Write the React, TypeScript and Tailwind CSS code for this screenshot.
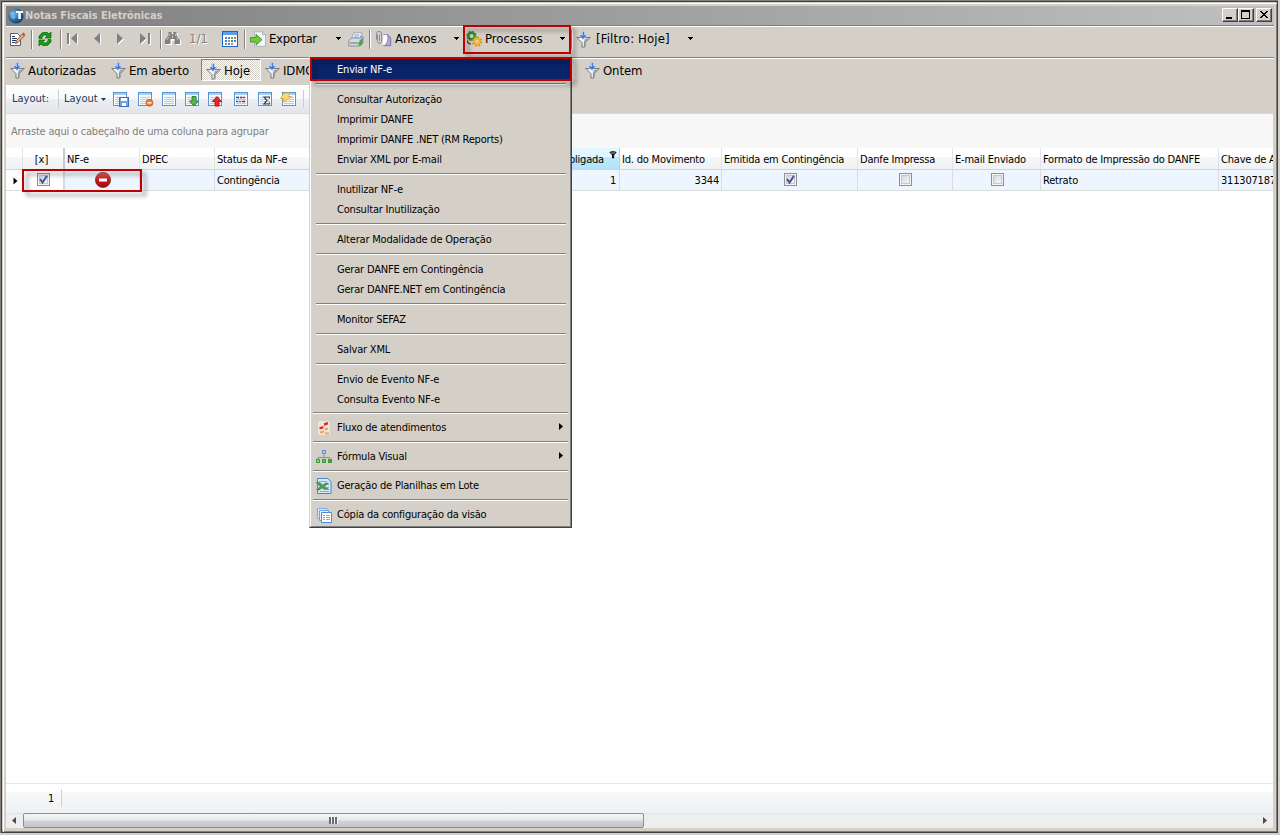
import type { ReactNode } from "react";

interface MenuEntry {
  label: string;
  icon?: ReactNode;
  submenu?: boolean;
}

/* ---------- icons ---------- */

const AppIcon = () => (
  <svg width="16" height="16" viewBox="0 0 16 16">
    <defs>
      <radialGradient id="globe" cx="0.35" cy="0.35" r="0.7">
        <stop offset="0" stopColor="#7db4dc" />
        <stop offset="0.6" stopColor="#2667a5" />
        <stop offset="1" stopColor="#123f78" />
      </radialGradient>
    </defs>
    <circle cx="8" cy="8" r="7.6" fill="url(#globe)" />
    <path d="M2 5c2-3 4-1 4 1s2 2 1 4-3 1-4 0" fill="#8ec6ea" opacity="0.6" />
    <path d="M8 3h7v2h-2.200V11H10.300V5H8z" fill="#fff" />
  </svg>
);

const EditIcon = () => (
  <svg width="17" height="16" viewBox="0 0 17 16">
    <path d="M1.500 2.500h7l3 3v9h-10z" fill="#fff" stroke="#5a5f6e" />
    <path d="M3 5.500h3M3 7.500h5M3 9.500h4M3 11.500h3" stroke="#2d3560" />
    <path d="M6.500 12.500l1-3 6-6.500 2 1.800-6.500 6.700z" fill="#f2b27c" stroke="#6b4030" strokeWidth="0.800" />
    <path d="M13 3l1.300-1.500 2 1.800-1.300 1.700z" fill="#c8483c" />
  </svg>
);

const RefreshIcon = () => (
  <svg width="16" height="16" viewBox="0 0 16 16" fill="#12a012" stroke="#0a6410" strokeWidth="0.7">
    <path d="M2 7.500V5l3.500-3.500h5L12 3l2-2v6H8l2-2-1-1H7L5 6v1.500z" />
    <path d="M14 8.500V11l-3.500 3.500h-5L4 13l-2 2V9h6l-2 2 1 1h2l2-2V8.500z" />
  </svg>
);

const NavIcon = ({ d, w }: { d: string; w: number }) => (
  <svg width={w} height="14" viewBox={`0 0 ${w} 14`}>
    <path d={d} transform="translate(1 1)" fill="#fff" />
    <path d={d} fill="#808080" />
  </svg>
);

const BinocularsIcon = () => (
  <svg width="17" height="14" viewBox="0 0 17 14">
    <g transform="translate(1 1)" fill="#fff">
      <path d="M4 0h3v2h2V0h3v3l3 5v4h-5V8H6v4H0V8l3-5z" />
    </g>
    <path d="M3.500 0h3v2h2V0h3v3l3.500 5v4h-5.500V7h-4v5H0V8l3.500-5z" fill="#808080" />
    <path d="M3.500 5l-1.500 3M11.500 5l1.500 3M7.500 3v3M4.500 2v2M10.500 2v2" stroke="#d4d0c8" strokeWidth="0.800" />
  </svg>
);

const CalendarIcon = () => (
  <svg width="16" height="16" viewBox="0 0 16 16" shapeRendering="crispEdges">
    <rect x="0.500" y="0.500" width="15" height="15" fill="#fff" stroke="#1c62c4" />
    <rect x="1" y="1" width="14" height="3" fill="#5f9cea" />
    <path d="M3 6h2v2H3zM6 6h2v2H6zM3 9h2v2H3zM6 12h2v2H6zM9 9h2v2H9zM12 9h2v2h-2z" fill="#3c86dc" />
    <path d="M9 6h2v2H9zM3 12h2v2H3z" fill="#49a94d" />
    <path d="M12 6h2v2h-2zM6 9h2v2H6zM9 12h2v2H9z" fill="#e07b42" />
  </svg>
);

const ExportIcon = () => (
  <svg width="17" height="16" viewBox="0 0 17 16">
    <path d="M4.500 0.800h8l3 3v11.500h-11z" fill="#f6f8fc" stroke="#a3a9b8" strokeWidth="0.800" />
    <path d="M12.500 0.800v3h3" fill="#cfd6e4" stroke="#a3a9b8" strokeWidth="0.800" />
    <path d="M0.500 6.500h5.500V3.300L12 8.700l-6 5.500v-3.200H0.500z" fill="#72cb3c" stroke="#378a1c" strokeWidth="0.800" />
  </svg>
);

const PrinterIcon = () => (
  <svg width="16" height="15" viewBox="0 0 16 15">
    <path d="M6 0.800h8l-2.500 6H3.500z" fill="#fff" stroke="#8b93a5" strokeWidth="0.800" />
    <path d="M6.500 3h5M5.800 5h5" stroke="#6c9bd4" />
    <path d="M0.800 8.500l3-2.500h8l3.200-1.500v6l-3 3.500H0.800z" fill="#d5dade" stroke="#7a828c" strokeWidth="0.800" />
    <path d="M11.500 8.500l3.300-3V10.500l-3.300 3.300z" fill="#76828e" />
    <path d="M2 11h8" stroke="#68717e" />
    <path d="M10.500 10h4v2l-1.500 1.500h-2.500z" fill="#2fb52f" />
  </svg>
);

const AttachIcon = () => (
  <svg width="17" height="16" viewBox="0 0 17 16">
    <path d="M8.500 3.500h4l3 3v8h-8" fill="#fff" stroke="#8d82b5" strokeWidth="0.800" />
    <path d="M12.500 3.500c1 4 .5 8-3 11.200h6.200V7z" fill="#b3a8d8" stroke="#6d5da5" strokeWidth="0.700" />
    <path d="M2.500 3.500v7a2 2 0 004 0V3a2.200 2.200 0 00-5-.5v6M4.500 3.500v6.500" fill="none" stroke="#6f8dac" strokeWidth="0.900" />
  </svg>
);

const GearsIcon = () => (
  <svg width="17" height="16" viewBox="0 0 17 16">
    <circle cx="5.500" cy="5" r="3.300" fill="none" stroke="#2f8f33" strokeWidth="2.600" />
    <circle cx="5.500" cy="5" r="4.600" fill="none" stroke="#3da63c" strokeWidth="1.400" strokeDasharray="1.800 1.800" />
    <circle cx="11" cy="10.500" r="3" fill="none" stroke="#f5b027" strokeWidth="2.600" />
    <circle cx="11" cy="10.500" r="4.500" fill="none" stroke="#d98f14" strokeWidth="1.500" strokeDasharray="1.800 1.700" />
    <path d="M1.500 9.500c0 2 1.500 3.500 3.500 3.500" fill="none" stroke="#333" strokeWidth="1.200" />
  </svg>
);

const FilterIcon = () => (
  <svg width="15" height="17" viewBox="0 0 15 17">
    <path d="M1 6.500h13L9 11.500v4l-3 1v-5z" fill="#f4f4f4" />
    <path d="M9 7.500L7.800 11v4.500l1.200-.5v-3.500L13 7.500z" fill="#a3a6ab" />
    <path d="M0.500 6.500h14M1 6.700l5 5v4.500M14 6.700l-5 5v4M6 16h3" fill="none" stroke="#6b6e73" strokeWidth="0.900" />
    <path d="M5.500 0.500h3V4H11L7 8.500 3 4h2.500z" fill="#3f78da" stroke="#dbe6f8" strokeWidth="0.500" />
    <path d="M6 1h1v4H6z" fill="#9dc0f5" />
  </svg>
);

const DropArrow = () => (
  <svg width="7" height="4" viewBox="0 0 7 4" shapeRendering="crispEdges" className="shrink-0">
    <path d="M1 0h5v1H1zM2 1h3v1H2zM3 2h1v1H3z" fill="#000" />
  </svg>
);

const GridBase = ({ children, x = 1 }: { children?: ReactNode; x?: number }) => (
  <svg width="16" height="16" viewBox="0 0 16 16">
    <g transform={`translate(${x} 1)`}>
      <rect x="0.500" y="0.500" width="13" height="13" fill="#fff" stroke="#5b94d2" />
      <rect x="1" y="1" width="12" height="2" fill="#a9cdf2" />
      <path d="M2 5.500h10M2 7.500h10M2 9.500h10M2 11.500h10" stroke="#a9c9dc" strokeWidth="0.900" />
      <path d="M4.500 4v9M7.500 4v9M10.500 4v9" stroke="#c9dcec" strokeWidth="0.800" />
    </g>
    {children}
  </svg>
);

const SaveGridIcon = () => (
  <GridBase x={0}>
    <rect x="6.500" y="6.500" width="9" height="9" fill="#6fa4e4" stroke="#3a70ba" />
    <path d="M8 7h6v3H8zM9 12h4v3H9z" fill="#fff" />
  </GridBase>
);
const RemoveGridIcon = () => (
  <GridBase x={0}>
    <circle cx="11.500" cy="11.800" r="3.500" fill="#ec7a35" stroke="#c05a1c" strokeWidth="0.700" />
    <path d="M9.500 11.800h4" stroke="#fff" strokeWidth="1.400" />
  </GridBase>
);
const DownGridIcon = () => (
  <GridBase>
    <path d="M8 5.500h4V10h2.500L10 15 5.500 10H8z" fill="#58b548" stroke="#2a7a20" strokeWidth="0.900" />
  </GridBase>
);
const UpGridIcon = () => (
  <GridBase>
    <path d="M8 15h4v-4.500h2.500L10 5.500l-4.500 5H8z" fill="#e8262b" stroke="#a30f14" strokeWidth="0.900" />
  </GridBase>
);
const BandGridIcon = () => (
  <GridBase>
    <path d="M3 6.500h3M7 6.500h2M3 10.500h2M9 10.500h3" stroke="#2b4c7d" strokeWidth="1.500" />
    <path d="M9.500 6.500H12M6 10.500h2" stroke="#d3322e" strokeWidth="1.500" />
  </GridBase>
);
const SumGridIcon = () => (
  <GridBase>
    <path d="M12.500 7.500V6H7l3 3.500L7 13h5.500v-1.500" fill="none" stroke="#3a404c" strokeWidth="1.200" />
  </GridBase>
);
const FlashGridIcon = () => (
  <GridBase x={2}>
    <path d="M4 2h6.500L8 5.500h3.500L2 12.500l2.500-5H0.500z" fill="#ffd868" stroke="#dba53a" strokeWidth="0.800" />
  </GridBase>
);

const FlowIcon = () => (
  <svg width="16" height="16" viewBox="0 0 16 16">
    <rect x="2" y="1" width="12" height="14" fill="#eee4da" />
    <path d="M8 3l4-1v2.500L8 6zM3.500 7l4-1v2.500l-4 1z" fill="#d6342c" />
    <path d="M8.500 8.500l3.500-1v2l-3 1zM4 11.500l4-1v2l-3.500 1zM9 12.500h4v1.800H9z" fill="#eea04a" />
  </svg>
);
const TreeIcon = () => (
  <svg width="16" height="16" viewBox="0 0 16 16">
    <path d="M8 5v3M2 10V8.500h12V10" fill="none" stroke="#8d9096" />
    <rect x="6.500" y="1.500" width="3" height="3" fill="#a6cbf3" stroke="#5c94d8" />
    <g fill="#8ed87b" stroke="#3c9c42">
      <rect x="0.500" y="10.500" width="3" height="3" />
      <rect x="6.500" y="10.500" width="3" height="3" fill="#5fbf58" />
      <rect x="12.500" y="10.500" width="3" height="3" fill="#3da344" />
    </g>
  </svg>
);
const SheetIcon = () => (
  <svg width="16" height="16" viewBox="0 0 16 16">
    <path d="M1.500 0.500h10l3.500 3v12H1.500z" fill="#d5e7fb" stroke="#4787cd" />
    <path d="M3 3.500h8M8 6.500h5M10 9.500h3M4 13.500h9" stroke="#7eb0e4" />
    <path d="M0 4.500h4l2.500 2.500 3-2h3L8.500 8.500l4.500 3H8.500L6 10l-2.500 2H0.500L4 8.500z" fill="#4a9c50" stroke="#2a7436" strokeWidth="0.400" />
  </svg>
);
const CopyIcon = () => (
  <svg width="16" height="16" viewBox="0 0 16 16">
    <path d="M1.500 1.500h9v10h-9z" fill="#dcebfb" stroke="#79ace2" />
    <path d="M3.500 3.500h9v10h-9z" fill="#e6f1fc" stroke="#6aa1de" />
    <path d="M5.500 5.500h10v10h-10z" fill="#fff" stroke="#4e8dd4" />
    <path d="M7 8.500h2M7 10.500h2M7 12.500h2" stroke="#6fbf4c" />
    <path d="M10 8.500h4M10 10.500h4M10 12.500h4" stroke="#7eaee2" />
  </svg>
);

const StopIcon = () => (
  <svg width="16" height="16" viewBox="0 0 16 16">
    <defs>
      <linearGradient id="stop" x1="0" y1="0" x2="0" y2="1">
        <stop offset="0" stopColor="#e8685c" />
        <stop offset="0.500" stopColor="#c8171a" />
        <stop offset="1" stopColor="#9c0c10" />
      </linearGradient>
    </defs>
    <circle cx="8" cy="8" r="7.600" fill="url(#stop)" stroke="#8e1d1c" strokeWidth="0.700" />
    <rect x="4" y="6.500" width="8" height="3" fill="#fff" />
  </svg>
);

/* ---------- small parts ---------- */

const Sep = ({ className = "" }: { className?: string }) => (
  <div className={`h-[19px] w-[2px] shrink-0 border-l border-[#808080] bg-white ${className}`} />
);

const Slot = ({ className = "", children }: { className?: string; children: ReactNode }) => (
  <div className={`flex shrink-0 items-center whitespace-nowrap ${className}`}>{children}</div>
);

const CheckBox = ({ checked = false }: { checked?: boolean }) => (
  <span className="flex size-[13px] items-center justify-center border border-[#8e8f8f] bg-[#f4f4f4] p-px">
    <span className="flex size-[9px] items-center justify-center border border-[#c3c7ce] bg-gradient-to-br from-[#d3d6db] to-[#f8f8f8]">
      {checked && (
        <svg width="9" height="9" viewBox="0 0 9 9" className="shrink-0">
          <path d="M1 4l2.500 3.500L8 0.800" fill="none" stroke="#3c539c" strokeWidth="2" />
        </svg>
      )}
    </span>
  </span>
);

const WinButton = ({ d, className = "" }: { d: string; className?: string }) => (
  <button
    className={`flex h-[14px] w-4 items-center justify-center border border-t-white border-r-[#404040] border-b-[#404040] border-l-white bg-[#d4d0c8] shadow-[inset_-1px_-1px_0_#808080] ${className}`}
  >
    <svg width="14" height="12" viewBox="0 0 14 12" shapeRendering="crispEdges" className="shrink-0">
      <path d={d} fill="#000" />
    </svg>
  </button>
);

const columns = [
  { title: "NF-e", cell: <StopIcon />, center: true },
  { title: "DPEC", cell: "" },
  { title: "Status da NF-e", cell: "Contingência" },
  { title: "Cód. Coligada", cell: "1", right: true, filtered: true },
  { title: "Id. do Movimento", cell: "3344", right: true },
  { title: "Emitida em Contingência", cell: <CheckBox checked />, center: true },
  { title: "Danfe Impressa", cell: <CheckBox />, center: true },
  { title: "E-mail Enviado", cell: <CheckBox />, center: true },
  { title: "Formato de Impressão do DANFE", cell: "Retrato" },
  { title: "Chave de A", cell: "311307187" },
];

const gridCols =
  "grid shrink-0 grid-cols-[17px_42px_75px_75px_306px_99px_102px_136px_95px_88px_178px_60px]";

const menuGroups: string[][] = [
  ["Enviar NF-e"],
  ["Consultar Autorização", "Imprimir DANFE", "Imprimir DANFE .NET (RM Reports)", "Enviar XML por E-mail"],
  ["Inutilizar NF-e", "Consultar Inutilização"],
  ["Alterar Modalidade de Operação"],
  ["Gerar DANFE em Contingência", "Gerar DANFE.NET em Contingência"],
  ["Monitor SEFAZ"],
  ["Salvar XML"],
  ["Envio de Evento NF-e", "Consulta Evento NF-e"],
];

const menuExtras: MenuEntry[] = [
  { label: "Fluxo de atendimentos", icon: <FlowIcon />, submenu: true },
  { label: "Fórmula Visual", icon: <TreeIcon />, submenu: true },
  { label: "Geração de Planilhas em Lote", icon: <SheetIcon /> },
  { label: "Cópia da configuração da visão", icon: <CopyIcon /> },
];

/* ---------- sections ---------- */

const TitleBar = () => (
  <div className="flex h-[19px] shrink-0 items-center bg-gradient-to-r from-[#808080] to-[#c0c0c0] pl-[2px]">
    <AppIcon />
    <span className="ml-px pt-px text-[11px] font-bold tracking-[-0.08px] text-[#d4d0c8]">
      Notas Fiscais Eletrônicas
    </span>
    <div className="ml-auto flex pr-[2px] pb-px">
      <WinButton d="M3 8h6v2H3z" />
      <WinButton d="M2 1h9v9H2zM3 3v6h7V3z" />
      <WinButton className="ml-[2px]" d="M3 2h2v1h1v1h2V3h1V2h2v1h-1v1H9v1H8v1h1v1h1v1h1v1H9V8H8V7H6v1H5v1H3V8h1V7h1V6h1V5H5V4H4V3H3z" />
    </div>
  </div>
);

const ToolBar = () => (
  <div className="flex h-[32px] shrink-0 border-t border-b border-t-white border-b-[#808080] text-[13px]">
    <div className="flex h-[24px] items-center">
      <Slot className="ml-[3px] w-[22px]"><EditIcon /></Slot>
      <Sep />
      <Slot className="ml-[4px] w-[23px]"><RefreshIcon /></Slot>
      <Sep />
      <Slot className="ml-[5px] w-[26px]"><NavIcon w={13} d="M0 1h2v11H0zM10 1v11L4 6.500z" /></Slot>
      <Slot className="w-[24px]"><NavIcon w={9} d="M7 1v11L1 6.500z" /></Slot>
      <Slot className="w-[23px]"><NavIcon w={9} d="M0 1v11l6-5.500z" /></Slot>
      <Slot className="w-[21px]"><NavIcon w={14} d="M0 1v11l6-5.500zM8 1h2v11H8z" /></Slot>
      <Sep className="-ml-px" />
      <Slot className="ml-[3px] w-[24px]"><BinocularsIcon /></Slot>
      <Slot className="w-[33px] text-[#808080] [text-shadow:1px_1px_0_#fff]">1/1</Slot>
      <Slot className="w-[22px] pb-px"><CalendarIcon /></Slot>
      <Sep />
      <Slot className="ml-[4px] w-[19px]"><ExportIcon /></Slot>
      <Slot className="w-[66px] tracking-[-0.3px]">Exportar</Slot>
      <Slot className="w-[13px]"><DropArrow /></Slot>
      <Slot className="w-[21px]"><PrinterIcon /></Slot>
      <Sep />
      <Slot className="ml-[4px] w-[20px]"><AttachIcon /></Slot>
      <Slot className="w-[58px] tracking-[-0.1px]">Anexos</Slot>
      <Slot className="w-[13px]"><DropArrow /></Slot>
      <Slot className="w-[19px]"><GearsIcon /></Slot>
      <Slot className="w-[74px]">Processos</Slot>
      <Slot className="w-[12px]"><DropArrow /></Slot>
      <Sep />
      <Slot className="ml-[3px] w-[20px]"><FilterIcon /></Slot>
      <Slot className="w-[91px] tracking-[0.150px]">[Filtro: Hoje]</Slot>
      <Slot><DropArrow /></Slot>
    </div>
  </div>
);

const FilterBar = () => (
  <div className="flex h-[27px] shrink-0 items-start border-t border-white text-[13px] tracking-[-0.1px]">
    <Slot className="ml-[4px] h-[22px] w-[18px]"><FilterIcon /></Slot>
    <Slot className="h-[23px] w-[83px]">Autorizadas</Slot>
    <Slot className="h-[22px] w-[18px]"><FilterIcon /></Slot>
    <Slot className="h-[23px] w-[72px]">Em aberto</Slot>
    <Slot className="h-[22px] w-[60px] border border-t-[#808080] border-r-white border-b-white border-l-[#808080] bg-[#eae8e3] bg-[repeating-conic-gradient(#fff_0_25%,#d4d0c8_0_50%)] bg-size-[2px_2px] pt-[2px] pl-[4px]">
      <FilterIcon />
      <span className="ml-[3px]">Hoje</span>
    </Slot>
    <Slot className="ml-[4px] h-[22px] w-[18px]"><FilterIcon /></Slot>
    <Slot className="h-[23px] w-[302px]">IDMOV</Slot>
    <Slot className="h-[22px] w-[18px]"><FilterIcon /></Slot>
    <Slot className="h-[23px]">Ontem</Slot>
  </div>
);

const LayoutBar = () => (
  <div className="h-[28px] shrink-0 bg-[#d4d0c8]">
    <div className="flex h-[28px] w-[420px] items-center bg-[linear-gradient(#fff_0,#f7f8fa_50%,#eceef2_50%,#e3e5ea_100%)] text-[11px] text-[#1e395b]">
      <Slot className="ml-[6px] w-[46px] pt-px">Layout:</Slot>
      <div className="h-[18px] w-px bg-[#c9ccd2]" />
      <Slot className="ml-[5px] w-[37px] pt-px">Layout</Slot>
      <Slot className="w-[12px]">
        <svg width="5" height="3" viewBox="0 0 5 3"><path d="M0 0h5L2.500 3z" fill="#1e395b" /></svg>
      </Slot>
      <Slot className="w-[25px]"><SaveGridIcon /></Slot>
      <Slot className="w-[23px]"><RemoveGridIcon /></Slot>
      <Slot className="w-[23px]"><GridBase /></Slot>
      <Slot className="w-[23px]"><DownGridIcon /></Slot>
      <Slot className="w-[26px]"><UpGridIcon /></Slot>
      <Slot className="w-[24px]"><BandGridIcon /></Slot>
      <Slot className="w-[23px]"><SumGridIcon /></Slot>
      <Slot className="w-[23px]"><FlashGridIcon /></Slot>
      <div className="h-[18px] w-px bg-[#c9ccd2]" />
    </div>
  </div>
);

const headFill = "bg-[linear-gradient(#fff_0,#fff_45%,#f6f7f8_45%,#f0f1f3_100%)]";

const DataGrid = () => (
  <div className="flex h-[715px] w-[1267px] shrink-0 flex-col overflow-hidden bg-white text-[11px] tracking-[-0.2px] text-black">
    <div className="flex h-[35px] shrink-0 items-center border-t border-[#d9d9d9] bg-[#f7f7f7] pt-[3px] pl-[5px] text-[#808080]">
      Arraste aqui o cabeçalho de uma coluna para agrupar
    </div>
    <div className={`h-[22px] border-b border-[#d5d5d5] ${gridCols}`}>
      <div className={`border-r border-[#e2e3e6] ${headFill}`} />
      <div className={`flex items-center justify-center border-r-2 border-[#c8c9cc] pt-[3px] pr-[3px] tracking-normal ${headFill}`}>
        [x]
      </div>
      {columns.map((c) =>
        c.filtered ? (
          <div
            key={c.title}
            className="flex justify-end border-r border-[#96d9f9] bg-[linear-gradient(#e3f7ff_0,#e3f7ff_45%,#bde9fb_45%,#b3e2f8_100%)] pr-px"
          >
            <span className="mr-[5px] self-center pt-[3px]">{c.title}</span>
            <svg width="9" height="8" viewBox="0 0 9 8" className="mt-[3px]">
              <path d="M1 1.500c0-1 6-1 6 0L4.700 4v3H3.500V4z" fill="#111" stroke="#111" />
              <path d="M2 2h4" stroke="#ccc" strokeWidth="0.800" />
            </svg>
          </div>
        ) : (
          <div
            key={c.title}
            className={`flex items-center overflow-hidden border-r border-[#e2e3e6] pt-[3px] pl-[2px] whitespace-nowrap ${headFill}`}
          >
            {c.title}
          </div>
        )
      )}
    </div>
    <div className={`h-[21px] border-b border-[#dcdcdc] ${gridCols}`}>
      <div className="flex items-center border-r border-[#e2e3e6] pt-px pl-[7px]">
        <svg width="5" height="8" viewBox="0 0 5 8"><path d="M0.500 0.500v7L4.500 4z" fill="#000" /></svg>
      </div>
      <div className="flex items-center justify-center border-r-2 border-[#d5dbe2] pb-px">
        <CheckBox checked />
      </div>
      {columns.map((c) => (
        <div
          key={c.title}
          className={`flex items-center border-r border-[#d9dde2] bg-[#edf6fe] px-[2px] whitespace-nowrap ${
            c.center ? "justify-center pr-px pb-px" : "pt-[2px]"
          } ${c.right ? "justify-end" : ""} ${c.filtered ? "pr-[3px]" : ""}`}
        >
          {c.cell}
        </div>
      ))}
    </div>
    <div className="grow" />
    <div className="h-[9px] shrink-0 border-t border-[#e6e6e6]" />
    <div className="flex h-[21px] shrink-0 bg-gradient-to-b from-[#f7f8fa] to-[#f0f1f3]">
      <span className="w-[49px] pr-px text-right leading-[13px]">1</span>
      <div className="-mt-[3px] ml-[6px] h-[18px] w-px bg-[#cfd2d6]" />
    </div>
    <div className="flex h-[15px] shrink-0 items-stretch bg-[#eeeeee] shadow-[inset_0_1px_0_#e2e2e2]">
      <div className="flex w-[17px] items-center pl-[6px]">
        <svg width="4" height="7" viewBox="0 0 4 7"><path d="M4 0v7L0 3.500z" fill="#4a4a4a" /></svg>
      </div>
      <div className="flex w-[621px] items-center justify-center rounded-[2px] border border-[#8c8e91] bg-[linear-gradient(#f6f6f6_0,#e9e9eb_45%,#d2d3d7_55%,#c3c4c9_100%)]">
        <svg width="9" height="7" viewBox="0 0 9 7" shapeRendering="crispEdges">
          <path d="M0 0h2v7H0zM3 0h2v7H3zM6 0h2v7H6z" fill="#6a6b6f" />
          <path d="M2 0h1v7H2zM5 0h1v7H5zM8 0h1v7H8z" fill="#f5f5f5" />
        </svg>
      </div>
      <div className="ml-auto flex items-center pr-[6px]">
        <svg width="4" height="7" viewBox="0 0 4 7"><path d="M0 0v7l4-3.500z" fill="#4a4a4a" /></svg>
      </div>
    </div>
  </div>
);

const ProcessMenu = () => (
  <div className="absolute top-[57px] left-[309px] h-[471px] w-[263px] border border-t-[#d4d0c8] border-r-[#404040] border-b-[#404040] border-l-[#d4d0c8] bg-[#d4d0c8] text-[11px] tracking-[-0.2px] text-black">
    <div className="h-[469px] border border-t-white border-r-[#808080] border-b-[#808080] border-l-white">
      {menuGroups.map((group, i) => (
        <div key={group[0]}>
          {i > 0 && <div className="mr-[4px] ml-[5px] my-1 h-[2px] border-t border-[#808080] bg-white" />}
          {group.map((label) => (
            <div
              key={label}
              className={`flex h-5 items-center pt-[2px] pl-[26px] ${i === 0 ? "bg-[#0a246a] text-white" : ""}`}
            >
              {label}
            </div>
          ))}
        </div>
      ))}
      <div className="pt-[3px]">
        {menuExtras.map((entry) => (
          <div key={entry.label}>
            <div className="mx-[2px] h-[2px] border-t border-[#808080] bg-white" />
            <div className="flex h-[27px] items-center pl-[5px]">
              {entry.icon}
              <span className="ml-[5px] pt-[2px]">{entry.label}</span>
              {entry.submenu && (
                <svg width="4" height="7" viewBox="0 0 4 7" className="mr-[7px] mb-[3px] ml-auto">
                  <path d="M0 0v7l4-3.500z" fill="#000" />
                </svg>
              )}
            </div>
          </div>
        ))}
      </div>
    </div>
  </div>
);

const Marker = ({ className }: { className: string }) => (
  <div
    className={`pointer-events-none absolute border-2 border-[#c00000] drop-shadow-[4px_4px_2px_rgba(0,0,0,0.4)] ${className}`}
  />
);

export default function App() {
  return (
    <div className="relative h-[835px] w-[1280px] overflow-hidden bg-[#d4d0c8] font-['DejaVu_Sans_Condensed','DejaVu_Sans',sans-serif] text-black">
      <div className="flex h-[833px] w-[1278px] flex-col border-t border-l border-[#808080]">
        <div className="flex h-[832px] flex-col border border-[#404040] shadow-[inset_-1px_-1px_0_#808080]">
          <div className="mt-px ml-px flex grow flex-col border-t border-l border-white pt-[2px] pr-[3px] pl-[2px]">
            <TitleBar />
            <div className="h-px shrink-0 bg-[#808080]" />
            <ToolBar />
            <FilterBar />
            <LayoutBar />
            <DataGrid />
          </div>
        </div>
      </div>
      <ProcessMenu />
      <Marker className="top-[25px] left-[463px] h-[29px] w-[108px]" />
      <Marker className="top-[57px] left-[310px] h-[24px] w-[262px]" />
      <Marker className="top-[169px] left-[22px] h-[23px] w-[120px]" />
    </div>
  );
}
